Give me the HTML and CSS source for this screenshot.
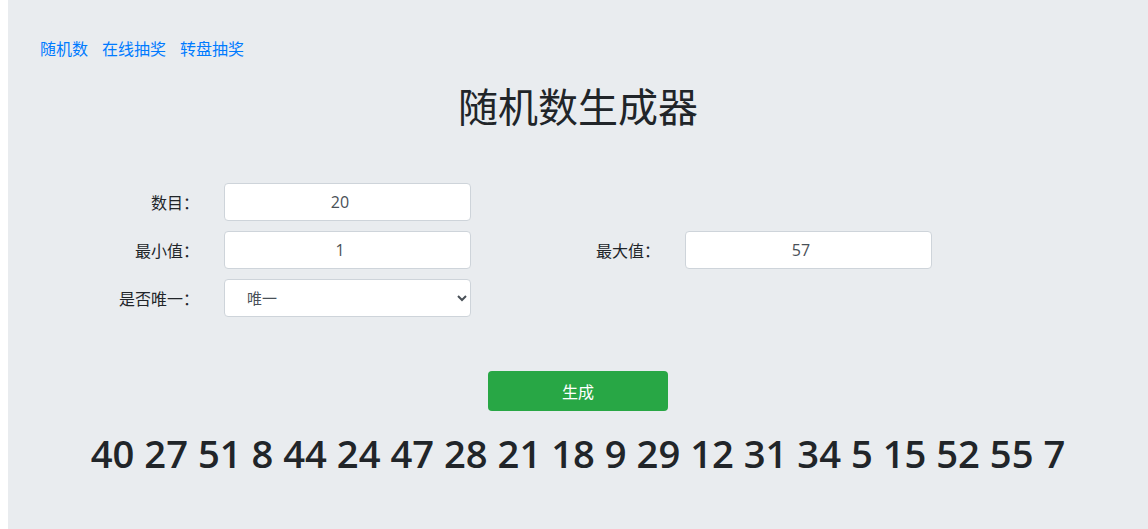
FILE: index.html
```html
<!DOCTYPE html>
<html lang="zh-CN">
<head>
  <meta charset="UTF-8">
  <title>随机数生成器</title>
  <link rel="stylesheet" href="styles.css">
</head>
<body>

  <div class="pagina">
    <nav class="menu">
      <a href="#">随机数</a>
      <a href="#">在线抽奖</a>
      <a href="#">转盘抽奖</a>
    </nav>

    <h1 class="titulo">随机数生成器</h1>

    <form class="formulario" id="form-gerar">
      <label for="numero">数目：</label>
      <input type="number" id="numero" value="20">
      <span></span>
      <span></span>

      <label for="minimo">最小值：</label>
      <input type="number" id="minimo" value="1">
      <label for="maximo">最大值：</label>
      <input type="number" id="maximo" value="57">

      <label for="unico">是否唯一：</label>
      <select id="unico">
        <option value="1">唯一</option>
        <option value="0">不唯一</option>
      </select>
    </form>

    <div class="acoes">
      <button type="button" id="gerar">生成</button>
    </div>

    <h1 class="resultado" id="resultado">40 27 51 8 44 24 47 28 21 18 9 29 12 31 34 5 15 52 55 7</h1>
  </div>

</body>
</html>
```

FILE: styles.css
```css
body {
  font-family: "Open Sans", "Noto Sans CJK SC", sans-serif;
  margin: 0 0 0 8px;
  background-color: #fff;
  color: #212529;
  font-size: 16px;
}

.pagina {
  background-color: #e9ecef;
  min-height: 529px;
  padding-top: 37px;
  box-sizing: border-box;
}

.menu {
  padding-left: 32px;
  line-height: 24px;
  display: flex;
  gap: 14px;
}

.menu a {
  color: #007bff;
  text-decoration: none;
}

.titulo {
  margin: 22px 0 0;
  text-align: center;
  font-size: 40px;
  font-weight: 400;
  line-height: 48px;
}

.formulario {
  display: grid;
  grid-template-columns: 191px 247px 164px 247px;
  column-gap: 25px;
  row-gap: 10px;
  margin-top: 52px;
  align-items: center;
}

.formulario label {
  text-align: right;
}

.formulario input,
.formulario select {
  height: 38px;
  box-sizing: border-box;
  border: 1px solid #ced4da;
  border-radius: 4px;
  background-color: #fff;
  color: #495057;
  font-family: inherit;
  font-size: 15px;
  padding: 6px 12px;
}

.formulario input {
  text-align: center;
  font-size: 16px;
}

.formulario select {
  padding-left: 18px;
}

.acoes {
  display: flex;
  justify-content: center;
  margin-top: 54px;
}

.acoes button {
  width: 180px;
  height: 40px;
  border: none;
  border-radius: 4px;
  background-color: #28a745;
  color: #fff;
  font-family: inherit;
  font-size: 16px;
  cursor: pointer;
}

.resultado {
  margin: 19px 0 0;
  text-align: center;
  font-size: 38.2px;
  font-weight: 600;
  line-height: 46px;
}
```
